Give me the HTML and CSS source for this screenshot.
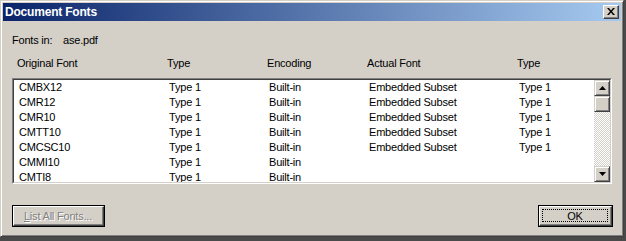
FILE: index.html
```html
<!DOCTYPE html>
<html>
<head>
<meta charset="utf-8">
<link rel="stylesheet" href="styles.css">
</head>
<body>
<div class="window">
  <div class="titlebar">
    <span class="title">Document Fonts</span>
    <span class="close"><svg width="8" height="7" viewBox="0 0 8 7"><path d="M0 0h2l2 2.5L6 0h2L5 3.5 8 7H6L4 4.5 2 7H0l3-3.5z" fill="#000"/></svg></span>
  </div>
  <div class="content">
    <div class="fonts-in"><span class="label">Fonts in:</span><span>ase.pdf</span></div>
    <div class="header">
      <span class="c1">Original Font</span><span class="c2">Type</span><span class="c3">Encoding</span><span class="c4">Actual Font</span><span class="c5">Type</span>
    </div>
    <div class="listbox">
      <div class="listinner">
        <div class="rows">
          <div class="row"><span class="c1">CMBX12</span><span class="c2">Type 1</span><span class="c3">Built-in</span><span class="c4">Embedded Subset</span><span class="c5">Type 1</span></div>
          <div class="row"><span class="c1">CMR12</span><span class="c2">Type 1</span><span class="c3">Built-in</span><span class="c4">Embedded Subset</span><span class="c5">Type 1</span></div>
          <div class="row"><span class="c1">CMR10</span><span class="c2">Type 1</span><span class="c3">Built-in</span><span class="c4">Embedded Subset</span><span class="c5">Type 1</span></div>
          <div class="row"><span class="c1">CMTT10</span><span class="c2">Type 1</span><span class="c3">Built-in</span><span class="c4">Embedded Subset</span><span class="c5">Type 1</span></div>
          <div class="row"><span class="c1">CMCSC10</span><span class="c2">Type 1</span><span class="c3">Built-in</span><span class="c4">Embedded Subset</span><span class="c5">Type 1</span></div>
          <div class="row"><span class="c1">CMMI10</span><span class="c2">Type 1</span><span class="c3">Built-in</span><span class="c4"></span><span class="c5"></span></div>
          <div class="row"><span class="c1">CMTI8</span><span class="c2">Type 1</span><span class="c3">Built-in</span><span class="c4"></span><span class="c5"></span></div>
        </div>
        <div class="scrollbar">
          <div class="sbtn"><svg width="7" height="4" viewBox="0 0 7 4"><path d="M3.5 0L7 4H0z" fill="#000"/></svg></div>
          <div class="thumb"></div>
          <div class="track"></div>
          <div class="sbtn"><svg width="7" height="4" viewBox="0 0 7 4"><path d="M0 0h7L3.5 4z" fill="#000"/></svg></div>
        </div>
      </div>
    </div>
    <div class="buttons">
      <div class="btn btn-list"><div class="face"><span class="disabled"><u>L</u>ist All Fonts...</span></div></div>
      <div class="btn btn-ok"><div class="face"><div class="focus">OK</div></div></div>
    </div>
  </div>
</div>
</body>
</html>
```

FILE: styles.css
```css
* { box-sizing: border-box; }
html, body { margin: 0; padding: 0; }
body {
  background: #4a4a4a;
  width: 626px;
  height: 241px;
  overflow: hidden;
  font-family: "Liberation Sans", Arial, sans-serif;
  font-size: 11px;
  letter-spacing: -0.2px;
  color: #000;
}
.window {
  width: 624px;
  height: 237px;
  background: #d4d0c8;
  border: 1px solid;
  border-color: #d4d0c8 #404040 #404040 #d4d0c8;
  box-shadow: inset 1px 1px #fff, inset -1px -1px #808080;
  padding: 2px;
  display: flex;
  flex-direction: column;
}
.titlebar {
  height: 18px;
  flex: none;
  background: linear-gradient(to right, #0a246a, #a6caf0);
  display: flex;
  align-items: center;
  justify-content: space-between;
  padding: 0 2px 0 2px;
}
.title {
  color: #fff;
  font-weight: bold;
  font-size: 12px;
  letter-spacing: -0.2px;
}
.close {
  width: 16px;
  height: 14px;
  background: #d4d0c8;
  border: 1px solid;
  border-color: #fff #404040 #404040 #fff;
  box-shadow: inset -1px -1px #808080;
  display: flex;
  align-items: center;
  justify-content: center;
  padding-right: 1px;
  padding-bottom: 1px;
}
.close svg { display: block; }
.content {
  flex: 1;
  padding: 12px 9px 0 9px;
  display: flex;
  flex-direction: column;
}
.fonts-in {
  height: 14px;
  line-height: 14px;
  display: flex;
}
.fonts-in .label { width: 51px; }
.header {
  margin-top: 9px;
  height: 14px;
  line-height: 14px;
  display: flex;
  padding-left: 5px;
}
.c1 { width: 150px; flex: none; }
.c2 { width: 100px; flex: none; }
.c3 { width: 100px; flex: none; }
.c4 { width: 150px; flex: none; }
.c5 { flex: 1; }
.listbox {
  margin-top: 8px;
  height: 106px;
  border: 1px solid;
  border-color: #808080 #fff #fff #808080;
}
.listinner {
  height: 100%;
  border: 1px solid;
  border-color: #404040 #d4d0c8 #d4d0c8 #404040;
  background: #fff;
  display: flex;
}
.rows {
  flex: 1;
  overflow: hidden;
}
.row {
  height: 15px;
  line-height: 15px;
  display: flex;
  padding-left: 5px;
  white-space: nowrap;
}
.scrollbar {
  width: 16px;
  flex: none;
  display: flex;
  flex-direction: column;
}
.sbtn, .thumb {
  height: 16px;
  flex: none;
  background: #d4d0c8;
  border: 1px solid;
  border-color: #d4d0c8 #404040 #404040 #d4d0c8;
  box-shadow: inset 1px 1px #fff, inset -1px -1px #808080;
  display: flex;
  align-items: center;
  justify-content: center;
}
.sbtn svg { display: block; }
.track {
  flex: 1;
  background-image: conic-gradient(#d4d0c8 25%, #fff 0 50%, #d4d0c8 0 75%, #fff 0);
  background-size: 2px 2px;
}
.buttons {
  margin-top: 21px;
  display: flex;
  justify-content: space-between;
  margin-right: -1px;
}
.btn {
  height: 22px;
  border: 1px solid #000;
  background: #d4d0c8;
}
.btn-list { width: 93px; }
.btn-ok { width: 75px; }
.face {
  height: 100%;
  border: 1px solid;
  border-color: #fff #404040 #404040 #fff;
  box-shadow: inset -1px -1px #808080;
  display: flex;
  align-items: center;
  justify-content: center;
  padding: 2px 3px 3px 2px;
}
.disabled {
  color: #808080;
  text-shadow: 1px 1px 0 #fff;
}
.focus {
  width: 100%;
  height: 100%;
  border: 1px dotted #000;
  display: flex;
  align-items: center;
  justify-content: center;
}
```
